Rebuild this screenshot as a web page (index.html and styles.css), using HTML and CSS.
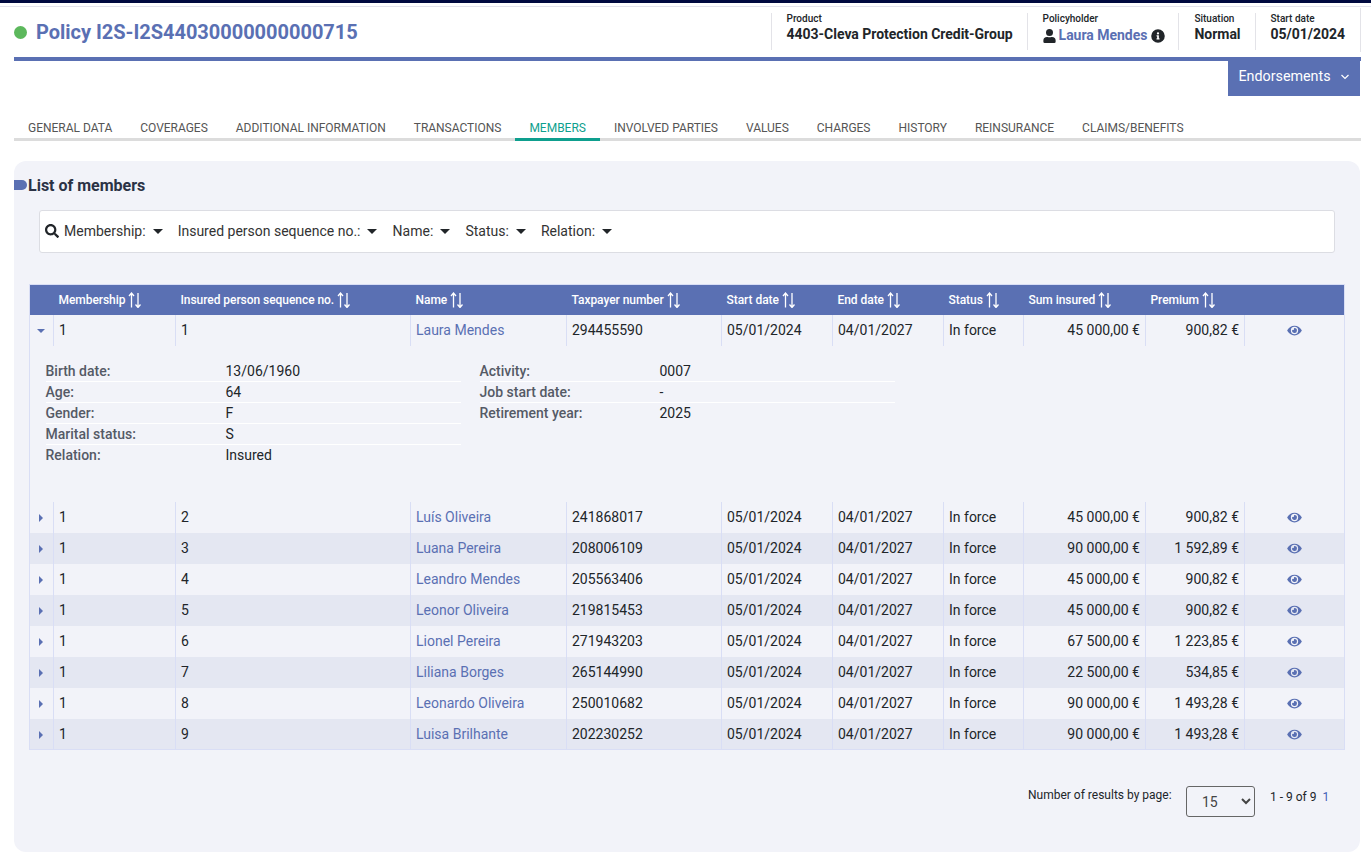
FILE: index.html

```html
<!DOCTYPE html>
<html lang="en">
<head>
    <meta charset="UTF-8">
    <meta name="viewport" content="width=device-width, initial-scale=1.0">
    <title>Policy I2S-I2S44030000000000715</title>
    <link rel="stylesheet" href="styles.css">
</head>
<body>
    <svg class="svg-defs" width="0" height="0">
        <symbol id="eye" viewBox="0 0 576 512"><path d="M572.5 241.400C518.300 135.600 410.900 64 288 64S57.700 135.600 3.500 241.400a32.400 32.400 0 0 0 0 29.200C57.700 376.400 165.100 448 288 448s230.300-71.600 284.500-177.400a32.400 32.400 0 0 0 0-29.200zM288 400a144 144 0 1 1 144-144 143.900 143.900 0 0 1-144 144zm0-240a95.300 95.300 0 0 0-25.300 3.800 47.900 47.900 0 0 1-66.900 66.900A95.800 95.800 0 1 0 288 160z"/></symbol>
        <symbol id="sort" viewBox="0 0 16 16"><path d="M4.500 15.500V1M2 4l2.500-3L7 4" fill="none" stroke="currentColor" stroke-width="1.300"/><path d="M11 1v14.500M8.500 12.500l2.500 3 2.500-3" fill="none" stroke="currentColor" stroke-width="1.300"/></symbol>
    </svg>

    <div class="top-strip"></div>

    <header class="policy-header">
        <h1 class="policy-title"><span class="status-dot"></span>Policy I2S-I2S44030000000000715</h1>
        <div class="policy-facts">
            <div class="fact"><span class="fact-label">Product</span><span class="fact-value">4403-Cleva Protection Credit-Group</span></div>
            <div class="fact fact-holder">
                <span class="fact-label">Policyholder</span>
                <span class="fact-value holder">
                    <svg class="holder-icon" viewBox="0 0 448 512"><path d="M224 256A128 128 0 1 0 224 0a128 128 0 0 0 0 256zm89.600 32h-16.700a174.100 174.100 0 0 1-145.800 0h-16.700A134.400 134.400 0 0 0 0 422.400V464a48 48 0 0 0 48 48h352a48 48 0 0 0 48-48v-41.600A134.400 134.400 0 0 0 313.600 288z"/></svg>
                    <a class="holder-name">Laura Mendes</a>
                    <svg class="info-icon" viewBox="0 0 512 512"><path d="M256 8a248 248 0 1 0 0 496 248 248 0 0 0 0-496zm0 110a42 42 0 1 1 0 84 42 42 0 0 1 0-84zm56 254a12 12 0 0 1-12 12h-88a12 12 0 0 1-12-12v-24a12 12 0 0 1 12-12h12v-64h-12a12 12 0 0 1-12-12v-24a12 12 0 0 1 12-12h64a12 12 0 0 1 12 12v100h12a12 12 0 0 1 12 12z"/></svg>
                </span>
            </div>
            <div class="fact"><span class="fact-label">Situation</span><span class="fact-value">Normal</span></div>
            <div class="fact fact-date"><span class="fact-label">Start date</span><span class="fact-value">05/01/2024</span></div>
        </div>
    </header>

    <div class="action-row">
        <button class="endorsements">Endorsements
            <svg class="chevron" viewBox="0 0 10 6"><path d="M1.500 1l3.500 3.500L8.500 1" fill="none" stroke="currentColor" stroke-width="1.200"/></svg>
        </button>
    </div>

    <nav class="tabs">
        <a class="tab">GENERAL DATA</a>
        <a class="tab">COVERAGES</a>
        <a class="tab">ADDITIONAL INFORMATION</a>
        <a class="tab">TRANSACTIONS</a>
        <a class="tab active">MEMBERS</a>
        <a class="tab">INVOLVED PARTIES</a>
        <a class="tab">VALUES</a>
        <a class="tab">CHARGES</a>
        <a class="tab">HISTORY</a>
        <a class="tab">REINSURANCE</a>
        <a class="tab">CLAIMS/BENEFITS</a>
    </nav>

    <main class="panel">
        <h2 class="panel-title"><span class="title-mark"></span>List of members</h2>

        <div class="filter-bar">
            <svg class="search-icon" viewBox="0 0 512 512"><path d="M505 442.700L405.300 343c-4.500-4.500-10.600-7-17-7H372c27.600-35.300 44-79.700 44-128C416 93.100 322.900 0 208 0S0 93.100 0 208s93.100 208 208 208c48.300 0 92.700-16.400 128-44v16.300c0 6.400 2.500 12.500 7 17l99.700 99.700c9.400 9.400 24.600 9.400 33.900 0l28.300-28.300c9.400-9.400 9.400-24.600.1-34zM208 336c-70.700 0-128-57.200-128-128 0-70.700 57.200-128 128-128 70.700 0 128 57.200 128 128 0 70.700-57.200 128-128 128z"/></svg>
            <span class="filter">Membership:<i class="caret"></i></span>
            <span class="filter">Insured person sequence no.:<i class="caret"></i></span>
            <span class="filter">Name:<i class="caret"></i></span>
            <span class="filter">Status:<i class="caret"></i></span>
            <span class="filter">Relation:<i class="caret"></i></span>
        </div>

        <table class="members">
            <colgroup>
                <col class="c-toggle"><col class="c-membership"><col class="c-seq"><col class="c-name"><col class="c-tax">
                <col class="c-start"><col class="c-end"><col class="c-status"><col class="c-sum"><col class="c-premium"><col class="c-view">
            </colgroup>
            <thead>
                <tr>
                    <th></th>
                    <th>Membership <svg class="sort"><use href="#sort"/></svg></th>
                    <th>Insured person sequence no. <svg class="sort"><use href="#sort"/></svg></th>
                    <th>Name <svg class="sort"><use href="#sort"/></svg></th>
                    <th>Taxpayer number <svg class="sort"><use href="#sort"/></svg></th>
                    <th>Start date <svg class="sort"><use href="#sort"/></svg></th>
                    <th>End date <svg class="sort"><use href="#sort"/></svg></th>
                    <th>Status <svg class="sort"><use href="#sort"/></svg></th>
                    <th>Sum insured <svg class="sort"><use href="#sort"/></svg></th>
                    <th>Premium <svg class="sort"><use href="#sort"/></svg></th>
                    <th></th>
                </tr>
            </thead>
            <tbody>
                <tr>
                    <td class="toggle"><i class="tri-down"></i></td><td>1</td><td>1</td><td><a>Laura Mendes</a></td><td>294455590</td><td>05/01/2024</td><td>04/01/2027</td><td>In force</td><td class="num">45 000,00 €</td><td class="num">900,82 €</td><td class="view"><svg class="eye"><use href="#eye"/></svg></td>
                </tr>
                <tr class="detail-row">
                    <td colspan="11">
                        <div class="detail">
                            <dl class="detail-col">
                                <div class="detail-line"><dt>Birth date:</dt><dd>13/06/1960</dd></div>
                                <div class="detail-line"><dt>Age:</dt><dd>64</dd></div>
                                <div class="detail-line"><dt>Gender:</dt><dd>F</dd></div>
                                <div class="detail-line"><dt>Marital status:</dt><dd>S</dd></div>
                                <div class="detail-line"><dt>Relation:</dt><dd>Insured</dd></div>
                            </dl>
                            <dl class="detail-col">
                                <div class="detail-line"><dt>Activity:</dt><dd>0007</dd></div>
                                <div class="detail-line"><dt>Job start date:</dt><dd>-</dd></div>
                                <div class="detail-line"><dt>Retirement year:</dt><dd>2025</dd></div>
                            </dl>
                        </div>
                    </td>
                </tr>
                <tr>
                    <td class="toggle"><i class="tri-right"></i></td><td>1</td><td>2</td><td><a>Luís Oliveira</a></td><td>241868017</td><td>05/01/2024</td><td>04/01/2027</td><td>In force</td><td class="num">45 000,00 €</td><td class="num">900,82 €</td><td class="view"><svg class="eye"><use href="#eye"/></svg></td>
                </tr>
                <tr class="alt">
                    <td class="toggle"><i class="tri-right"></i></td><td>1</td><td>3</td><td><a>Luana Pereira</a></td><td>208006109</td><td>05/01/2024</td><td>04/01/2027</td><td>In force</td><td class="num">90 000,00 €</td><td class="num">1 592,89 €</td><td class="view"><svg class="eye"><use href="#eye"/></svg></td>
                </tr>
                <tr>
                    <td class="toggle"><i class="tri-right"></i></td><td>1</td><td>4</td><td><a>Leandro Mendes</a></td><td>205563406</td><td>05/01/2024</td><td>04/01/2027</td><td>In force</td><td class="num">45 000,00 €</td><td class="num">900,82 €</td><td class="view"><svg class="eye"><use href="#eye"/></svg></td>
                </tr>
                <tr class="alt">
                    <td class="toggle"><i class="tri-right"></i></td><td>1</td><td>5</td><td><a>Leonor Oliveira</a></td><td>219815453</td><td>05/01/2024</td><td>04/01/2027</td><td>In force</td><td class="num">45 000,00 €</td><td class="num">900,82 €</td><td class="view"><svg class="eye"><use href="#eye"/></svg></td>
                </tr>
                <tr>
                    <td class="toggle"><i class="tri-right"></i></td><td>1</td><td>6</td><td><a>Lionel Pereira</a></td><td>271943203</td><td>05/01/2024</td><td>04/01/2027</td><td>In force</td><td class="num">67 500,00 €</td><td class="num">1 223,85 €</td><td class="view"><svg class="eye"><use href="#eye"/></svg></td>
                </tr>
                <tr class="alt">
                    <td class="toggle"><i class="tri-right"></i></td><td>1</td><td>7</td><td><a>Liliana Borges</a></td><td>265144990</td><td>05/01/2024</td><td>04/01/2027</td><td>In force</td><td class="num">22 500,00 €</td><td class="num">534,85 €</td><td class="view"><svg class="eye"><use href="#eye"/></svg></td>
                </tr>
                <tr>
                    <td class="toggle"><i class="tri-right"></i></td><td>1</td><td>8</td><td><a>Leonardo Oliveira</a></td><td>250010682</td><td>05/01/2024</td><td>04/01/2027</td><td>In force</td><td class="num">90 000,00 €</td><td class="num">1 493,28 €</td><td class="view"><svg class="eye"><use href="#eye"/></svg></td>
                </tr>
                <tr class="alt">
                    <td class="toggle"><i class="tri-right"></i></td><td>1</td><td>9</td><td><a>Luisa Brilhante</a></td><td>202230252</td><td>05/01/2024</td><td>04/01/2027</td><td>In force</td><td class="num">90 000,00 €</td><td class="num">1 493,28 €</td><td class="view"><svg class="eye"><use href="#eye"/></svg></td>
                </tr>
            </tbody>
        </table>

        <div class="pager">
            <span class="pager-label">Number of results by page:</span>
            <select class="pager-select"><option>15</option></select>
            <span class="pager-count">1 - 9 of 9</span>
            <a class="pager-page">1</a>
        </div>
    </main>
</body>
</html>
```

FILE: styles.css

```css
* {
    box-sizing: border-box;
}
body {
    margin: 0;
    padding: 0;
    font-family: Roboto, Arial, sans-serif;
    font-size: 14px;
    color: #212529;
    background-color: #fff;
}
.svg-defs {
    display: block;
    height: 0;
}
.top-strip {
    height: 7px;
    border-top: 3px solid #000a3f;
    border-bottom: 1px solid #e3e3ec;
}

/* header */
.policy-header {
    display: flex;
    justify-content: space-between;
    height: 54px;
    margin: 0 10px 0 14px;
    padding-top: 1px;
    border-bottom: 4px solid #5a70b3;
}
.policy-title {
    display: flex;
    align-items: center;
    margin: 0 0 1px;
    font-size: 20px;
    font-weight: 700;
    letter-spacing: -0.02px;
    color: #5a70b3;
}
.status-dot {
    width: 13px;
    height: 13px;
    margin-right: 9px;
    border-radius: 50%;
    background-color: #5cb85c;
}
.policy-facts {
    display: flex;
    height: 44px;
    border-right: 1px solid #e3e3e8;
}
.fact {
    display: flex;
    flex-direction: column;
    height: 37px;
    margin-top: 5px;
    padding: 0 14px 0 15px;
    border-left: 1px solid #e3e3e8;
}
.fact-holder {
    padding-right: 13px;
}
.fact-date {
    padding-right: 15px;
}
.fact-label {
    font-size: 10px;
    line-height: 12px;
    font-weight: 500;
}
.fact-value {
    font-size: 14px;
    line-height: 19px;
    margin-top: 0;
    font-weight: 700;
    letter-spacing: -0.02px;
}
.holder {
    display: flex;
    align-items: center;
    gap: 3px;
    margin-top: 1px;
}
.holder-name {
    color: #5a70b3;
}
.holder-icon {
    width: 13px;
    height: 14px;
    fill: #212529;
}
.info-icon {
    width: 14px;
    height: 14px;
    margin-left: 1px;
    fill: #212529;
}

/* endorsements button */
.action-row {
    display: flex;
    justify-content: flex-end;
    height: 35px;
    margin-right: 11px;
}
.endorsements {
    display: flex;
    align-items: center;
    justify-content: center;
    gap: 9px;
    width: 132px;
    padding: 0 0 6px;
    border: 0;
    font-family: inherit;
    font-size: 14.3px;
    color: #fff;
    background-color: #5a70b3;
}
.chevron {
    width: 10px;
    height: 6px;
    margin-top: 2px;
}

/* tabs */
.tabs {
    display: flex;
    height: 24px;
    margin: 21px 10px 0 14px;
    border-bottom: 3px solid #dcdcdc;
}
.tab {
    height: 24px;
    padding: 0 14px;
    font-size: 12px;
    line-height: 23px;
    letter-spacing: -0.015px;
    color: #555;
}
.tab.active {
    color: #0e9f8e;
    border-bottom: 3px solid #0e9f8e;
}

/* panel */
.panel {
    height: 691px;
    margin: 20px 11px 0 14px;
    padding-top: 14px;
    border-radius: 12px;
    background-color: #f2f3f9;
}
.panel-title {
    display: flex;
    align-items: center;
    height: 20px;
    margin: 0;
    font-size: 16px;
    font-weight: 700;
    color: #2b3245;
}
.title-mark {
    width: 13px;
    height: 10px;
    margin-right: 1px;
    border-radius: 0 5px 5px 0;
    background-color: #5a70b3;
}
.filter-bar {
    display: flex;
    align-items: center;
    height: 43px;
    margin: 15px 25px 0;
    padding: 0 0 1px 5px;
    border: 1px solid #dcdde3;
    border-radius: 3px;
    background-color: #fff;
}
.search-icon {
    width: 14px;
    height: 14px;
    margin-right: 5px;
    fill: #212529;
}
.filter {
    display: flex;
    align-items: center;
    margin-right: 15.100px;
    font-size: 14px;
    color: #333;
}
.caret {
    width: 0;
    height: 0;
    margin-left: 7px;
    border-left: 5px solid transparent;
    border-right: 5px solid transparent;
    border-top: 5px solid #212529;
}

/* table */
.members {
    width: 1315px;
    margin: 31px 0 0 15px;
    border-collapse: collapse;
    table-layout: fixed;
    border: 1px solid #d9def5;
}
.c-toggle { width: 24px; }
.c-membership { width: 122px; }
.c-seq { width: 235px; }
.c-name { width: 156px; }
.c-tax { width: 155px; }
.c-start { width: 111px; }
.c-end { width: 111px; }
.c-status { width: 80px; }
.c-sum { width: 122px; }
.c-premium { width: 99px; }
.c-view { width: 100px; }
.members th {
    height: 30px;
    padding: 0 5px;
    font-size: 12px;
    font-weight: 500;
    letter-spacing: -0.05px;
    text-align: left;
    white-space: nowrap;
    color: #fff;
    background-color: #5a70b3;
}
.sort {
    width: 16px;
    height: 16px;
    margin-left: -1px;
    vertical-align: -4px;
    color: #fff;
}
.members td {
    height: 31px;
    padding: 0 5px;
    border-left: 1px solid #d9def5;
    white-space: nowrap;
}
.members td:first-child {
    border-left: 0;
}
.members a {
    color: #5a70b3;
}
.members .num {
    text-align: right;
}
.members .toggle,
.members .view {
    text-align: center;
}
.members .toggle {
    padding: 0 2px 0 0;
}
.alt {
    background-color: #e4e7f2;
}
.tri-right {
    display: inline-block;
    border-top: 4px solid transparent;
    border-bottom: 4px solid transparent;
    border-left: 4px solid #5a70b3;
}
.tri-down {
    display: inline-block;
    vertical-align: 2px;
    border-left: 4px solid transparent;
    border-right: 4px solid transparent;
    border-top: 4px solid #5a70b3;
}
.eye {
    width: 15px;
    height: 13px;
    vertical-align: -2px;
    fill: #5a70b3;
}

/* expanded row */
.members .detail-row td {
    height: 156px;
    padding: 0;
    vertical-align: top;
}
.detail {
    display: flex;
    gap: 19px;
    padding: 15px 0 0 15.500px;
}
.detail-col {
    width: 415px;
    margin: 0;
}
.detail-line {
    display: flex;
    height: 21px;
    line-height: 20px;
    border-bottom: 1px solid #fff;
}
.detail-col .detail-line:last-child {
    border-bottom: 0;
}
.detail-line dt {
    width: 180px;
    font-weight: 500;
    color: #555a66;
}
.detail-line dd {
    margin: 0;
}

/* pager */
.pager {
    display: flex;
    align-items: flex-start;
    margin: 36px 0 0 1014px;
    font-size: 12px;
}
.pager-label {
    width: 158px;
    margin-top: 2px;
}
.pager-select {
    width: 69px;
    height: 31px;
    padding-left: 11px;
    font-family: inherit;
    font-size: 14px;
    color: #444;
    border: 1px solid #666;
    border-radius: 3px;
    background-color: #f2f3f9;
}
.pager-count {
    margin: 4px 0 0 15px;
}
.pager-page {
    margin: 4px 0 0 6px;
    color: #3f5fb5;
}
```
